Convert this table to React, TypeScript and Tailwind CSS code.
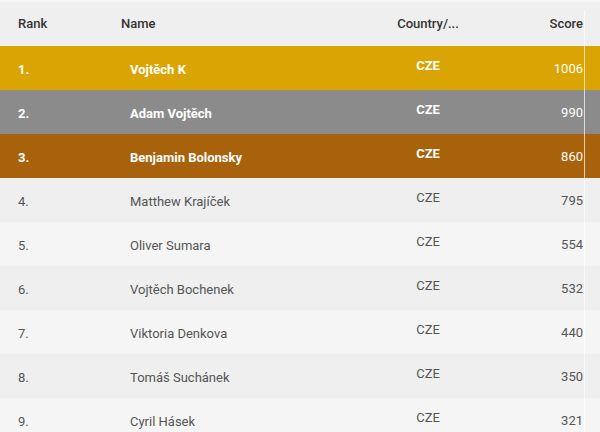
const rows = [
  { rank: 1, name: 'Vojtěch K', country: 'CZE', score: 1006 },
  { rank: 2, name: 'Adam Vojtěch', country: 'CZE', score: 990 },
  { rank: 3, name: 'Benjamin Bolonsky', country: 'CZE', score: 860 },
  { rank: 4, name: 'Matthew Krajíček', country: 'CZE', score: 795 },
  { rank: 5, name: 'Oliver Sumara', country: 'CZE', score: 554 },
  { rank: 6, name: 'Vojtěch Bochenek', country: 'CZE', score: 532 },
  { rank: 7, name: 'Viktoria Denkova', country: 'CZE', score: 440 },
  { rank: 8, name: 'Tomáš Suchánek', country: 'CZE', score: 350 },
  { rank: 9, name: 'Cyril Hásek', country: 'CZE', score: 321 },
];

const medal: Record<number, string> = {
  1: 'bg-[#daa504] text-white font-bold',
  2: 'bg-[#8b8b8b] text-white font-bold',
  3: 'bg-[#a9620c] text-white font-bold',
};

export default function App() {
  return (
    <div className="relative w-[600px] h-[432px] overflow-hidden bg-white font-['Roboto',sans-serif] text-[13px]">
      {/* Header */}
      <div className="flex items-center h-[46px] pl-[18px] pr-[17px] bg-[#efefef] border-t-2 border-[#f7f7f7] text-[#333] font-medium">
        <div className="w-[103px]">Rank</div>
        <div className="w-[257px]">Name</div>
        <div className="w-[100px] text-center">Country/...</div>
        <div className="flex-1 text-right">Score</div>
      </div>

      {/* Rows */}
      {rows.map((r) => {
        const top = medal[r.rank];
        const zebra = r.rank % 2 === 0 ? 'bg-[#efefef]' : 'bg-[#f5f5f5]';
        return (
          <div
            key={r.rank}
            className={`flex items-center h-[44px] pl-[18px] pr-[17px] ${top ?? `${zebra} text-[#555]`}`}
          >
            <div className="w-[103px] pt-[3px]">{r.rank}.</div>
            <div className="w-[257px] pl-[9px] pt-[3px]">{r.name}</div>
            <div className="w-[100px] text-center pb-[4px]">{r.country}</div>
            <div className="flex-1 text-right pt-[2px] font-normal">{r.score}</div>
          </div>
        );
      })}

      {/* scroll edge */}
      <div className="absolute left-[584px] top-[10px] bottom-0 w-px bg-white/70" />
    </div>
  );
}
